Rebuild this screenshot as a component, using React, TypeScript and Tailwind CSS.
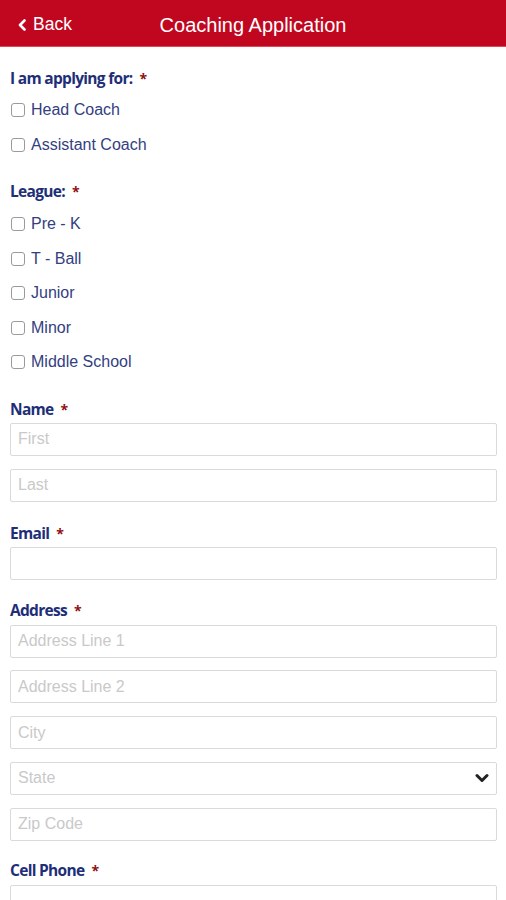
import { ReactNode } from "react";

const body = { fontFamily: '"Liberation Sans", Arial, sans-serif' };
const narrow = { fontFamily: '"Open Sans", sans-serif' };

function Label({ children }: { children: ReactNode }) {
  return (
    <div className="h-[20px] flex items-center text-[15.5px] font-bold tracking-[-0.045em] text-[#1e2f78] leading-none" style={narrow}>
      {children}
      <span className="ml-[7px] text-[#8f1010] text-[14px]">*</span>
    </div>
  );
}

function Check({ label }: { label: string }) {
  return (
    <label className="h-[34.5px] flex items-center gap-[6px] text-[16px] text-[#33407f]" style={body}>
      <span className="w-[14px] h-[14px] ml-[1px] rounded-[3px] border border-[#9a9a9a] bg-white"></span>
      {label}
    </label>
  );
}

function Field({ placeholder, select }: { placeholder?: string; select?: boolean }) {
  return (
    <div className="h-[33px] border border-[#dadada] rounded-[2px] flex items-center justify-between pl-[7px] pr-[7px] text-[16px] text-[#c9c9c9]" style={body}>
      <span>{placeholder}</span>
      {select && (
        <svg width="14" height="10" viewBox="0 0 14 10">
          <path d="M2 2.5 L7 7.5 L12 2.5" fill="none" stroke="#222" strokeWidth="3" strokeLinecap="round" strokeLinejoin="round" />
        </svg>
      )}
    </div>
  );
}

export default function App() {
  return (
    <div className="w-[506px] h-[900px] overflow-hidden bg-white">
      <div className="relative h-[47px] pt-[3px] bg-[#c1071f] flex items-center justify-center border-b border-[#e2485a]" style={body}>
        <div className="absolute left-[18px] top-0 pt-[3px] h-full flex items-center gap-[6px] text-white text-[17.5px]">
          <svg width="9" height="12" viewBox="0 0 9 12">
            <path d="M6.5 1.5 L2 6 L6.5 10.5" fill="none" stroke="white" strokeWidth="2.6" strokeLinecap="round" strokeLinejoin="round" />
          </svg>
          Back
        </div>
        <h1 className="text-white text-[20px]">Coaching Application</h1>
      </div>

      <div className="pl-[10px] pr-[9px] pt-[22px] flex flex-col">
        <Label>I am applying for:</Label>
        <div className="mt-[4px] flex flex-col">
          <Check label="Head Coach" />
          <Check label="Assistant Coach" />
        </div>

        <div className="mt-[20px]">
          <Label>League:</Label>
        </div>
        <div className="mt-[5px] flex flex-col">
          {["Pre - K", "T - Ball", "Junior", "Minor", "Middle School"].map(l => (
            <Check key={l} label={l} />
          ))}
        </div>

        <div className="mt-[20px]">
          <Label>Name</Label>
        </div>
        <div className="mt-[3px] flex flex-col gap-[13px]">
          <Field placeholder="First" />
          <Field placeholder="Last" />
        </div>

        <div className="mt-[22px]">
          <Label>Email</Label>
        </div>
        <div className="mt-[3px]">
          <Field />
        </div>

        <div className="mt-[21px]">
          <Label>Address</Label>
        </div>
        <div className="mt-[4px] flex flex-col gap-[12.75px]">
          <Field placeholder="Address Line 1" />
          <Field placeholder="Address Line 2" />
          <Field placeholder="City" />
          <Field placeholder="State" select />
          <Field placeholder="Zip Code" />
        </div>

        <div className="mt-[20px]">
          <Label>Cell Phone</Label>
        </div>
        <div className="mt-[4px]">
          <Field />
        </div>
      </div>
    </div>
  );
}
